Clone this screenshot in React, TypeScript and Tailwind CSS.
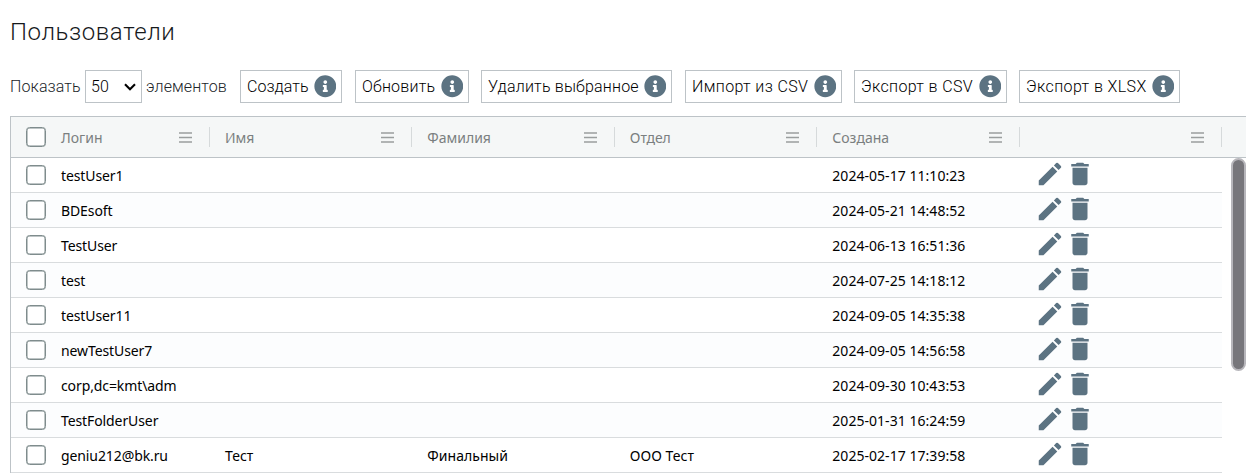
import React from 'react';
import { FaInfoCircle } from 'react-icons/fa';
import { MdDelete, MdEdit } from 'react-icons/md';

const actions = [
  { label: 'Создать', box: 'w-[102px] ml-[13px]', text: 'w-[61px] tracking-[0.05px]' },
  { label: 'Обновить', box: 'w-[114px] ml-[13px]', text: 'w-[73px] tracking-[0.2px]' },
  { label: 'Удалить выбранное', box: 'w-[191px] ml-[12px]', text: 'w-[150px] tracking-[0.19px]' },
  { label: 'Импорт из CSV', box: 'w-[157px] ml-[13px]', text: 'w-[116px] tracking-[0.36px]' },
  { label: 'Экспорт в CSV', box: 'w-[153px] ml-[12px]', text: 'w-[112px] tracking-[0.36px]' },
  { label: 'Экспорт в XLSX', box: 'w-[161px] ml-[12px]', text: 'w-[120px] tracking-[0.4px]' },
];

const headers = ['Имя', 'Фамилия', 'Отдел', 'Создана', ''];

const users = [
  ['testUser1', '', '', '', '2024-05-17 11:10:23'],
  ['BDEsoft', '', '', '', '2024-05-21 14:48:52'],
  ['TestUser', '', '', '', '2024-06-13 16:51:36'],
  ['test', '', '', '', '2024-07-25 14:18:12'],
  ['testUser11', '', '', '', '2024-09-05 14:35:38'],
  ['newTestUser7', '', '', '', '2024-09-05 14:56:58'],
  ['corp,dc=kmt\\adm', '', '', '', '2024-09-30 10:43:53'],
  ['TestFolderUser', '', '', '', '2025-01-31 16:24:59'],
  ['geniu212@bk.ru', 'Тест', 'Финальный', 'ООО Тест', '2025-02-17 17:39:58'],
];

const grid = 'grid grid-cols-[198.9px_202.4px_202.5px_202.5px_202.5px_202.5px]';

function Checkbox() {
  return (
    <span
      role="checkbox"
      aria-checked="false"
      className="block h-5 w-5 shrink-0 rounded-[3.5px] border border-[#7f8c8d] bg-white shadow-[inset_0_0_0_0.5px_#7f8c8d]"
    />
  );
}

function MenuIcon() {
  return (
    <svg className="mr-[17px] ml-auto h-[11px] w-[13px]" viewBox="0 0 13 11">
      <path d="M0 1h13M0 5.5h13M0 10h13" stroke="#9a9e9e" strokeWidth="1.3" />
    </svg>
  );
}

function HeaderCell({ label, first = false }: { label: string; first?: boolean }) {
  return (
    <div className="flex h-10 items-center pl-[15px]">
      {first && (
        <span className="mr-[15px]">
          <Checkbox />
        </span>
      )}
      <span className="pt-[2px] leading-5">{label}</span>
      <MenuIcon />
      <span className="h-5 w-px bg-[#d6dadb]" />
    </div>
  );
}

export default function App() {
  return (
    <div className="h-[473px] w-[1246px] overflow-hidden bg-white pl-[10px] font-['Roboto',sans-serif]">
      <h1 className="h-[70px] pt-4 text-[24px] leading-8 font-light tracking-[0.6px] text-[#16191c]">
        Пользователи
      </h1>
      <div className="flex h-[33px] items-center text-[16px] font-light whitespace-nowrap text-black">
        <span className="w-[75px] tracking-[0.1px] text-[#212529]">Показать</span>
        <div className="flex h-[33px] w-[57px] items-center justify-between border border-[#bdc3c7] pr-[5px] pl-[5px]">
          <span>50</span>
          <svg className="h-[8px] w-3" viewBox="0 0 12 8" fill="none">
            <path d="M1 1.2 6 6.2 11 1.2" stroke="black" strokeWidth="2.1" />
          </svg>
        </div>
        <span className="ml-1 w-[81px] tracking-[0.1px] text-[#212529]">элементов</span>
        {actions.map((a) => (
          <button
            key={a.label}
            type="button"
            className={`flex h-[33px] shrink-0 items-center border border-[#bdc3c7] pl-[6px] ${a.box}`}
          >
            <span className={`shrink-0 text-left ${a.text}`}>{a.label}</span>
            <FaInfoCircle className="ml-[5.6px] h-[22.6px] w-[22.6px] shrink-0 text-[#5c7382]" />
          </button>
        ))}
      </div>

      <div className="mt-[13px] h-[357px] border-t border-l border-[#bdc3c7] font-['Noto_Sans',sans-serif] text-[14px]">
        <div className={`h-[41px] border-b border-[#bdc3c7] bg-[#f5f7f7] text-[#7b7f80] ${grid}`}>
          <HeaderCell label="Логин" first />
          {headers.map((h, i) => (
            <HeaderCell key={i} label={h} />
          ))}
        </div>
        <div className="flex justify-between">
          <div className="w-[1211px]">
            {users.map((u, i) => (
              <div
                key={u[0]}
                className={`h-[35px] border-b border-[#d9dcde] text-black ${grid} ${i % 2 ? 'bg-[#fcfdfe]' : 'bg-white'}`}
              >
                <div className="flex items-center pl-[15px]">
                  <Checkbox />
                  <span className="ml-[15px] pt-[2px] leading-5 tracking-[-0.1px]">{u[0]}</span>
                </div>
                {u.slice(1).map((value, j) => (
                  <div key={j} className="flex items-center pt-[2px] pl-[15px] leading-5 tracking-[0.04px]">
                    {value}
                  </div>
                ))}
                <div className="flex items-start pt-[1px] pl-[15px] text-[30px] text-[#5c7382]">
                  <MdEdit />
                  <MdDelete />
                </div>
              </div>
            ))}
          </div>
          <div className="h-[213px] w-[15px] rounded-full border-2 border-[#b7b6bb] bg-[#77767b]" />
        </div>
      </div>
    </div>
  );
}
